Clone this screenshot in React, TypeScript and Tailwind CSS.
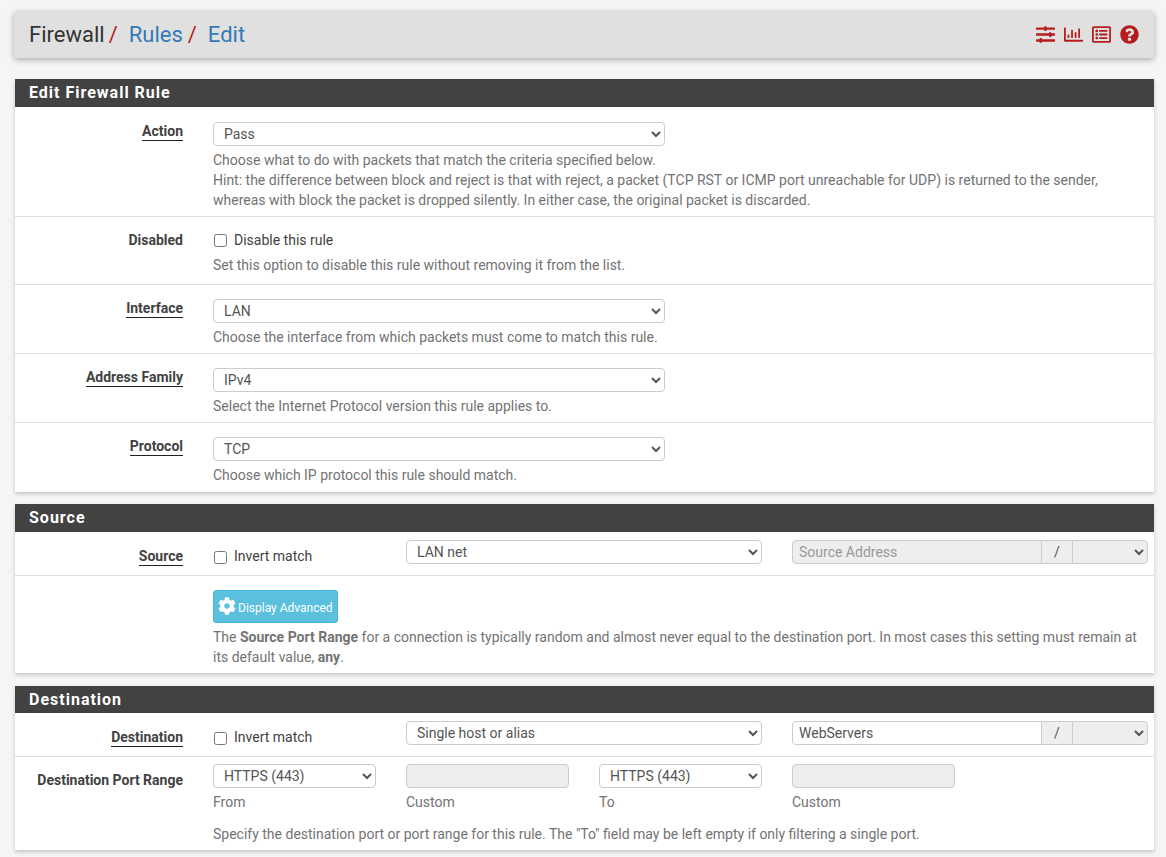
import type { ReactNode } from "react"
import { FaCog, FaQuestionCircle, FaRegChartBar, FaRegListAlt, FaSlidersH } from "react-icons/fa"

const selectClass = "block h-[24px] rounded-[4px] border border-[#ccc] bg-white pl-[6px] text-[14px] text-[#555]"
const helpClass = "mt-[4px] text-[14px] leading-[20px] text-[#737373]"

function Panel({ title, heading, gap, children }: { title: string; heading: string; gap: string; children: ReactNode }) {
  return (
    <section className={`${gap} ml-[15px] mr-[12px] bg-white shadow-[0_2px_4px_rgba(0,0,0,0.2)]`}>
      <h2 className={`${heading} bg-[#424242] pl-[14px] text-[16px] font-bold leading-[27px] tracking-[1px] text-white`}>
        {title}
      </h2>
      {children}
    </section>
  )
}

// One form row: label column on the left, field column on the right
function Row({
  label,
  linked,
  labelTop,
  top,
  bottom,
  last,
  children,
}: {
  label?: string
  linked?: boolean
  labelTop?: string
  top: string
  bottom: string
  last?: boolean
  children: ReactNode
}) {
  return (
    <div className={`flex ${top} ${bottom} ${last ? "" : "border-b border-[#e0e0e0]"}`}>
      <div className={`h-[20px] w-[168px] shrink-0 text-right text-[14px] font-bold leading-[20px] text-[#424242] ${labelTop ?? ""}`}>
        {label && (
          <span className={linked ? "inline-block border-b border-[#212121] leading-[18px]" : ""}>{label}</span>
        )}
      </div>
      <div className="ml-[30px] min-w-0 flex-1">{children}</div>
    </div>
  )
}

function Select({ value, className }: { value: string; className: string }) {
  return (
    <select className={`${selectClass} ${className}`} defaultValue={value}>
      <option>{value}</option>
    </select>
  )
}

function Invert() {
  return (
    <label className="flex h-[24px] w-[193px] shrink-0 items-start pl-[1px] pt-[6px] text-[14px] leading-[20px] text-[#424242]">
      <input type="checkbox" className="mr-[7px] mt-[5px] h-[13px] w-[13px]" />
      Invert match
    </label>
  )
}

function AddressGroup({ value, placeholder }: { value?: string; placeholder?: string }) {
  return (
    <div className="flex h-[24px] w-[356px] shrink-0 text-[14px]">
      <input
        readOnly
        value={value ?? ""}
        placeholder={placeholder}
        className={`w-[250px] rounded-l-[4px] border border-[#ccc] pl-[6px] text-[#555] placeholder:text-[#999] ${
          value ? "bg-white" : "bg-[#eee]"
        }`}
      />
      <span className="flex w-[30px] items-center justify-center border-y border-[#ccc] bg-[#eee] text-[#555]">/</span>
      <select className="w-[76px] rounded-r-[4px] border border-[#ccc] bg-[#eee] text-[#555]">
        <option></option>
      </select>
    </div>
  )
}

function PortField({ label, children }: { label: string; children: ReactNode }) {
  return (
    <div className="w-[163px] shrink-0">
      {children}
      <div className="mt-[4px] text-[14px] leading-[20px] text-[#737373]">{label}</div>
    </div>
  )
}

export default function App() {
  return (
    <div className="h-[857px] overflow-hidden bg-[#f5f5f5] pt-[11px] font-[family-name:Roboto,sans-serif]">
      <header className="mb-[21px] ml-[14px] mr-[12px] flex h-[47px] items-center justify-between rounded-[3px] bg-[#e0e0e0] pl-[15px] pr-[15px] shadow-[0_2px_6px_rgba(0,0,0,0.3)]">
        <h1 className="text-[22px] leading-[47px] text-[#333]">
          Firewall<span className="ml-[4px] text-[#b71c1c]">/</span>
          <a className="ml-[11px] text-[#337ab7]">Rules</a>
          <span className="ml-[5px] text-[#b71c1c]">/</span>
          <a className="ml-[11px] text-[#337ab7]">Edit</a>
        </h1>
        <div className="flex items-center gap-[9px] text-[19px] text-[#b71c1c]">
          <FaSlidersH />
          <FaRegChartBar />
          <FaRegListAlt />
          <FaQuestionCircle />
        </div>
      </header>

      <Panel title="Edit Firewall Rule" heading="h-[28px]" gap="mb-[12px]">
        <Row label="Action" linked labelTop="-mt-[1px]" top="pt-[15px]" bottom="pb-[6px]">
          <Select value="Pass" className="w-[452px]" />
          <p className={helpClass}>
            Choose what to do with packets that match the criteria specified below.
            <br />
            Hint: the difference between block and reject is that with reject, a packet (TCP RST or ICMP port
            unreachable for UDP) is returned to the sender,
            <br />
            whereas with block the packet is dropped silently. In either case, the original packet is discarded.
          </p>
        </Row>
        <Row label="Disabled" top="pt-[13px]" bottom="pb-[9px]">
          <label className="flex items-center pl-[1px] text-[14px] leading-[20px] text-[#424242]">
            <input type="checkbox" className="mr-[7px] mt-[1px] h-[13px] w-[13px]" />
            Disable this rule
          </label>
          <p className="mt-[5px] text-[14px] leading-[20px] text-[#737373]">
            Set this option to disable this rule without removing it from the list.
          </p>
        </Row>
        <Row label="Interface" linked labelTop="-mt-[1px]" top="pt-[14px]" bottom="pb-[6px]">
          <Select value="LAN" className="w-[452px]" />
          <p className={helpClass}>Choose the interface from which packets must come to match this rule.</p>
        </Row>
        <Row label="Address Family" linked labelTop="-mt-[1px]" top="pt-[14px]" bottom="pb-[6px]">
          <Select value="IPv4" className="w-[452px]" />
          <p className={helpClass}>Select the Internet Protocol version this rule applies to.</p>
        </Row>
        <Row label="Protocol" linked labelTop="-mt-[1px]" last top="pt-[14px]" bottom="pb-[7px]">
          <Select value="TCP" className="w-[452px]" />
          <p className={helpClass}>Choose which IP protocol this rule should match.</p>
        </Row>
      </Panel>

      <Panel title="Source" heading="h-[28px]" gap="mb-[13px]">
        <Row label="Source" linked labelTop="pt-[6px]" top="pt-[8px]" bottom="pb-[11px]">
          <div className="flex items-start">
            <Invert />
            <Select value="LAN net" className="w-[356px] shrink-0" />
            <div className="ml-[30px]">
              <AddressGroup placeholder="Source Address" />
            </div>
          </div>
        </Row>
        <Row last top="pt-[14px]" bottom="pb-[6px]">
          <button className="flex h-[33px] w-[125px] items-center rounded-[3px] border border-[#46b8da] bg-[#5bc0de] pl-[4px] text-[12px] text-white">
            <FaCog className="-mt-[2px] mr-[2px] text-[18px]" />
            <span className="pt-[2px]">Display Advanced</span>
          </button>
          <p className={helpClass}>
            The <b>Source Port Range</b> for a connection is typically random and almost never equal to the destination
            port. In most cases this setting must remain at
            <br />
            its default value, <b>any</b>.
          </p>
        </Row>
      </Panel>

      <Panel title="Destination" heading="h-[27px]" gap="mb-[12px]">
        <Row label="Destination" linked labelTop="pt-[6px]" top="pt-[8px]" bottom="pb-[11px]">
          <div className="flex items-start">
            <Invert />
            <Select value="Single host or alias" className="w-[356px] shrink-0" />
            <div className="ml-[30px]">
              <AddressGroup value="WebServers" />
            </div>
          </div>
        </Row>
        <Row label="Destination Port Range" labelTop="pt-[6px]" last top="pt-[7px]" bottom="pb-[6px]">
          <div className="flex gap-[30px]">
            <PortField label="From">
              <Select value="HTTPS (443)" className="w-[163px]" />
            </PortField>
            <PortField label="Custom">
              <input readOnly className="block h-[24px] w-[163px] rounded-[4px] border border-[#ccc] bg-[#eee]" />
            </PortField>
            <PortField label="To">
              <Select value="HTTPS (443)" className="w-[163px]" />
            </PortField>
            <PortField label="Custom">
              <input readOnly className="block h-[24px] w-[163px] rounded-[4px] border border-[#ccc] bg-[#eee]" />
            </PortField>
          </div>
          <p className="mt-[12px] text-[14px] leading-[20px] text-[#737373]">
            Specify the destination port or port range for this rule. The "To" field may be left empty if only filtering
            a single port.
          </p>
        </Row>
      </Panel>
    </div>
  )
}
